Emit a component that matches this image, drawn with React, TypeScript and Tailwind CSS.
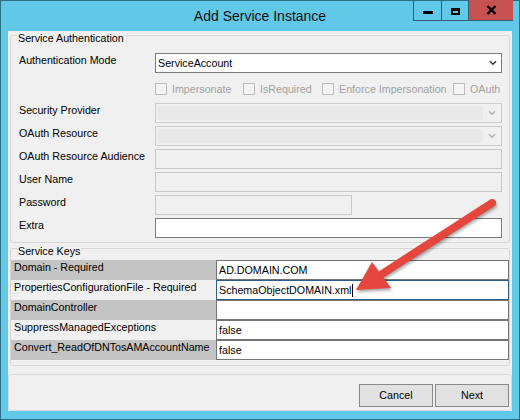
import React from 'react';

const keyRows = [
  { label: 'Domain - Required', value: 'AD.DOMAIN.COM', shaded: true, focused: false },
  { label: 'PropertiesConfigurationFile - Required', value: 'SchemaObjectDOMAIN.xml', shaded: false, focused: true },
  { label: 'DomainController', value: '', shaded: true, focused: false },
  { label: 'SuppressManagedExceptions', value: 'false', shaded: false, focused: false },
  { label: 'Convert_ReadOfDNTosAMAccountName', value: 'false', shaded: true, focused: false },
];

function Chevron({ muted }: { muted?: boolean }) {
  return (
    <svg width="8" height="6" viewBox="0 0 8 6" className="shrink-0">
      <path d="M1 1.2 L4 4.2 L7 1.2" fill="none" stroke={muted ? '#b4b4b4' : '#3a3a3a'} strokeWidth="1.6" />
    </svg>
  );
}

function DisabledCombo() {
  return (
    <div className="flex h-[20px] w-[347px] items-stretch border border-[#cccccc] bg-[#f0f0f0]">
      <div className="m-[2px] flex-1 bg-[#e9e9e9]" />
      <div className="flex w-[16px] items-center justify-center pr-[2px]">
        <Chevron muted />
      </div>
    </div>
  );
}

function Row({ label, children }: { label: string; children: React.ReactNode }) {
  return (
    <div className="flex h-[20px]">
      <div className="w-[144px] pl-[8px] leading-[14px]">{label}</div>
      {children}
    </div>
  );
}

function Check({ label, width }: { label: string; width?: string }) {
  return (
    <div className={`flex items-center ${width ?? ''}`}>
      <div className="h-[12px] w-[12px] shrink-0 border border-[#bcbcbc] bg-[#f4f4f4]" />
      <span className="ml-[5px] whitespace-nowrap text-[#a2a2a2]">{label}</span>
    </div>
  );
}

export default function App() {
  return (
    <div className="relative flex h-[420px] w-[520px] flex-col border border-[#2f6d85] bg-[#62c8e8] font-['Liberation_Sans',Arial,sans-serif] text-[10.7px] text-black">
      {/* Title bar */}
      <div className="grid h-[30px] grid-cols-[1fr_auto_1fr]">
        <div />
        <div className="flex items-center pt-[1px] text-[14px] text-[#111]">Add Service Instance</div>
        <div className="flex items-start justify-end pr-[6px]">
          <div className="-mt-[1px] flex h-[21px] border-b border-l border-[#2e5f74]">
            <div className="flex w-[28px] items-start justify-center border-r border-[#2e5f74] pt-[11px]">
              <div className="h-[3px] w-[10px] bg-black" />
            </div>
            <div className="flex w-[27px] items-start justify-center border-r border-[#2e5f74] pt-[8px]">
              <div className="h-[7px] w-[9px] border-2 border-t-[3px] border-black" />
            </div>
            <div className="flex w-[44px] items-center justify-center bg-[#c75050]">
              <svg width="11" height="10" viewBox="0 0 11 10">
                <path d="M1.5 1 L9.5 9 M9.5 1 L1.5 9" stroke="#000" strokeWidth="2.4" />
              </svg>
            </div>
          </div>
        </div>
      </div>

      {/* Client area */}
      <div className="mx-[7px] flex h-[380px] flex-col bg-[#f0f0f0]">
        {/* Service Authentication */}
        <div className="mx-[2px] mt-[4px] rounded-[3px] border border-[#d7d7d7] pb-[4px]">
          <div className="-mt-[5px] ml-[6px] w-fit bg-[#f0f0f0] px-[1px] leading-[14px]">Service Authentication</div>
          <div className="mt-[8px]">
            <Row label="Authentication Mode">
              <div className="flex h-[20px] w-[347px] items-center justify-between border border-[#7a7a7a] bg-white pl-[2px] pr-[4px]">
                <span>ServiceAccount</span>
                <Chevron />
              </div>
            </Row>
          </div>
          <div className="mt-[6px] flex h-[20px] items-center pl-[144px]">
            <Check label="Impersonate" width="w-[88px]" />
            <Check label="IsRequired" width="w-[79px]" />
            <Check label="Enforce Impersonation" width="w-[131px]" />
            <Check label="OAuth" />
          </div>
          <div className="mt-[4px] flex flex-col gap-[3px]">
            <Row label="Security Provider">
              <DisabledCombo />
            </Row>
            <Row label="OAuth Resource">
              <DisabledCombo />
            </Row>
            <Row label="OAuth Resource Audience">
              <div className="h-[20px] w-[347px] border border-[#c8c8c8] bg-[#f0f0f0]" />
            </Row>
            <Row label="User Name">
              <div className="h-[20px] w-[347px] border border-[#c8c8c8] bg-[#f0f0f0]" />
            </Row>
            <Row label="Password">
              <div className="h-[20px] w-[197px] border border-[#c8c8c8] bg-[#f0f0f0]" />
            </Row>
            <Row label="Extra">
              <div className="h-[20px] w-[347px] border border-[#7a7a7a] bg-white" />
            </Row>
          </div>
        </div>

        {/* Service Keys */}
        <div className="mx-[2px] mt-[5px] rounded-[3px] border border-[#d7d7d7] pb-[5px]">
          <div className="-mt-[5px] ml-[6px] w-fit bg-[#f0f0f0] px-[1px] leading-[14px]">Service Keys</div>
          <div className="mt-[2px] flex flex-col">
            {keyRows.map((r) => (
              <div key={r.label} className="flex h-[20px]">
                <div
                  className={`w-[205px] overflow-hidden whitespace-nowrap pl-[3px] leading-[14px] ${
                    r.shaded ? 'bg-[#c4c4c4]' : 'bg-[#f0f0f0]'
                  }`}
                >
                  {r.label}
                </div>
                <div
                  className={`flex w-[293px] items-center border bg-white pl-[2px] ${
                    r.focused ? 'border-[#2a5f8e]' : 'border-[#747474]'
                  }`}
                >
                  <span>{r.value}</span>
                  {r.focused && <span className="ml-[1px] h-[13px] w-px bg-black" />}
                </div>
              </div>
            ))}
          </div>
        </div>

        {/* Buttons */}
        <div className="mt-[8px] flex flex-1 items-start justify-end gap-[2px] rounded-[3px] border border-[#d3dbe1] pr-[2px] pt-[9px]">
          <button className="h-[23px] w-[74px] border border-[#8a8a8a] bg-[#e1e1e1] text-[10.7px]">Cancel</button>
          <button className="h-[23px] w-[74px] border border-[#8a8a8a] bg-[#e1e1e1] text-[10.7px]">Next</button>
        </div>
      </div>

      {/* Red annotation arrow */}
      <svg
        className="pointer-events-none absolute left-[-1px] top-[-1px] drop-shadow-[1px_2px_1.5px_rgba(0,0,0,0.35)]"
        width="520"
        height="420"
        viewBox="0 0 520 420"
      >
        <line x1="492" y1="203" x2="382" y2="274" stroke="#e5463d" strokeWidth="8" strokeLinecap="round" />
        <polygon points="356,290 372,262 391,288" fill="#e5463d" />
      </svg>
    </div>
  );
}
